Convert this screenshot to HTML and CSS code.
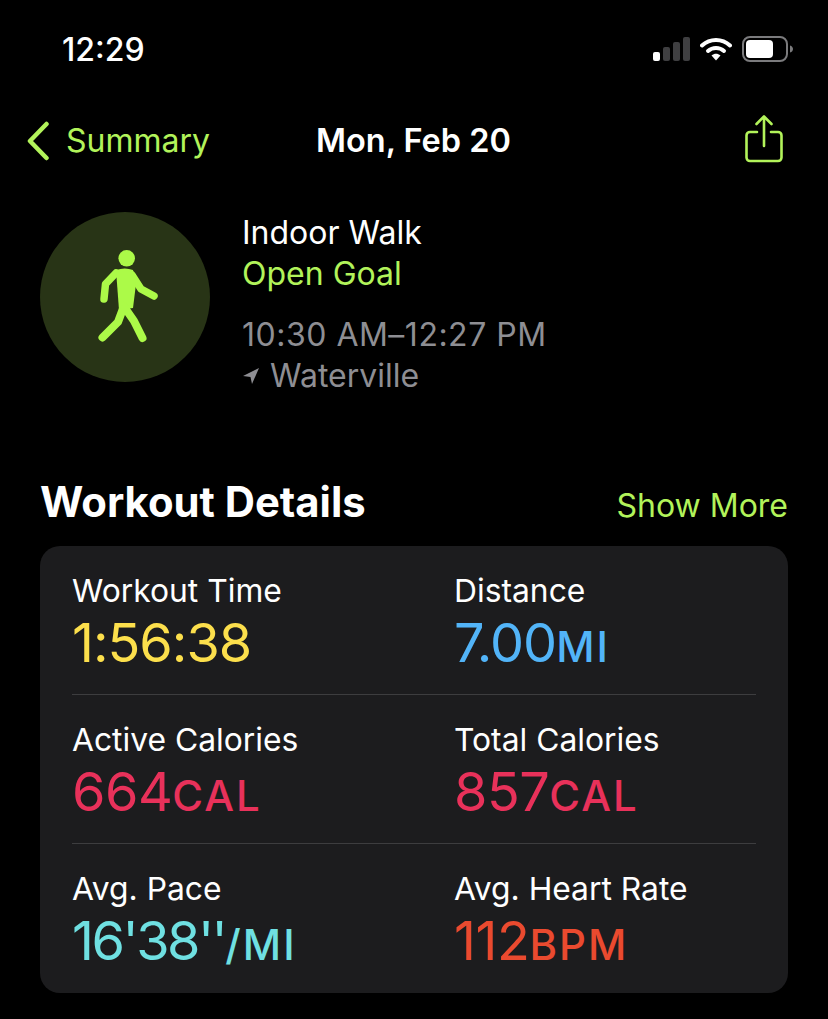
FILE: index.html
```html
<!DOCTYPE html>
<html lang="en">
<head>
    <meta charset="UTF-8">
    <meta name="viewport" content="width=device-width, initial-scale=1.0">
    <title>Workout Details</title>
    <link rel="stylesheet" href="styles.css">
</head>
<body>

    <header class="status-bar">
        <span class="clock">12:29</span>
        <div class="status-icons">
            <svg class="signal" width="37" height="24" viewBox="0 0 37 24">
                <rect x="0" y="15" width="7" height="9" rx="2" fill="#fff"/>
                <rect x="10" y="10" width="7" height="14" rx="2" fill="#3f3f41"/>
                <rect x="20" y="5" width="7" height="19" rx="2" fill="#3f3f41"/>
                <rect x="30" y="0" width="7" height="24" rx="2" fill="#3f3f41"/>
            </svg>
            <svg class="wifi" width="32" height="24" viewBox="0 0 32 24">
                <path d="M2 8.500C10 1 22 1 30 8.500" fill="none" stroke="#fff" stroke-width="4" stroke-linecap="round"/>
                <path d="M8 14C12.500 10 19.500 10 24 14" fill="none" stroke="#fff" stroke-width="4" stroke-linecap="round"/>
                <path d="M11.500 18.500C14.500 16 17.500 16 20.500 18.500L16 23.500Z" fill="#fff"/>
            </svg>
            <svg class="battery" width="52" height="26" viewBox="0 0 52 26">
                <rect x="1" y="1" width="44" height="24" rx="7" fill="none" stroke="#7b7b7d" stroke-width="2"/>
                <rect x="4" y="4" width="27" height="18" rx="4" fill="#fff"/>
                <path d="M48 9.500C50 10 51 11.500 51 13C51 14.500 50 16 48 16.500Z" fill="#7b7b7d"/>
            </svg>
        </div>
    </header>

    <nav class="nav-bar">
        <a class="back" href="#">
            <svg width="24" height="40" viewBox="0 0 24 40">
                <path d="M20.500 3L4 20L20.500 37" fill="none" stroke="#b2f35a" stroke-width="4.500" stroke-linecap="round" stroke-linejoin="round"/>
            </svg>
            <span>Summary</span>
        </a>
        <h1 class="nav-title">Mon, Feb 20</h1>
        <svg class="share" width="38" height="48" viewBox="0 0 38 48">
            <path d="M12 17H5C3 17 1.500 18.500 1.500 20.500V42.500C1.500 44.500 3 46 5 46H33C35 46 36.500 44.500 36.500 42.500V20.500C36.500 18.500 35 17 33 17H26" fill="none" stroke="#b2f35a" stroke-width="2.600" stroke-linecap="round"/>
            <path d="M19 31V2M11.500 9L19 1.500L26.500 9" fill="none" stroke="#b2f35a" stroke-width="2.600" stroke-linecap="round" stroke-linejoin="round"/>
        </svg>
    </nav>

    <section class="hero">
        <div class="activity-icon">
            <svg width="62" height="94" viewBox="0 0 62 94">
                <circle cx="29.700" cy="8.300" r="8.300" fill="#acfa48"/>
                <path d="M19 23L8.500 34L7 49" fill="none" stroke="#acfa48" stroke-width="7.500" stroke-linecap="round" stroke-linejoin="round"/>
                <path d="M35 25L44 39L57 46" fill="none" stroke="#acfa48" stroke-width="7.500" stroke-linecap="round" stroke-linejoin="round"/>
                <path d="M19 20Q28 17 36 20L39 34L36 58L22 60Z" fill="#acfa48"/>
                <path d="M27 56L21 72L5.500 87.500" fill="none" stroke="#acfa48" stroke-width="8" stroke-linecap="round" stroke-linejoin="round"/>
                <path d="M28 58L37 71L45.500 88" fill="none" stroke="#acfa48" stroke-width="8" stroke-linecap="round" stroke-linejoin="round"/>
            </svg>
        </div>
        <div class="hero-text">
            <p class="hero-name">Indoor Walk</p>
            <p class="hero-goal">Open Goal</p>
            <p class="hero-time">10:30 AM–12:27 PM</p>
            <p class="hero-place">
                <svg width="18" height="18" viewBox="0 0 18 18"><path d="M17 1L1 9L8.500 10L10 17Z" fill="#8e8e93"/></svg>
                <span>Waterville</span>
            </p>
        </div>
    </section>

    <section class="details">
        <div class="details-head">
            <h2>Workout Details</h2>
            <a href="#">Show More</a>
        </div>
        <div class="card">
            <div class="row">
                <div class="metric">
                    <div class="label">Workout Time</div>
                    <div class="value yellow">1:56:38</div>
                </div>
                <div class="metric">
                    <div class="label">Distance</div>
                    <div class="value blue">7.00<small>MI</small></div>
                </div>
            </div>
            <div class="row">
                <div class="metric">
                    <div class="label">Active Calories</div>
                    <div class="value pink">664<small>CAL</small></div>
                </div>
                <div class="metric">
                    <div class="label">Total Calories</div>
                    <div class="value pink">857<small>CAL</small></div>
                </div>
            </div>
            <div class="row">
                <div class="metric">
                    <div class="label">Avg. Pace</div>
                    <div class="value teal">16'38''<small>/MI</small></div>
                </div>
                <div class="metric">
                    <div class="label">Avg. Heart Rate</div>
                    <div class="value red">112<small>BPM</small></div>
                </div>
            </div>
        </div>
    </section>

</body>
</html>
```

FILE: styles.css
```css
* {
    box-sizing: border-box;
}
body {
    font-family: Inter, "Liberation Sans", sans-serif;
    background-color: #000;
    color: #fff;
    margin: 0;
    padding: 0;
    height: 1019px;
    overflow: hidden;
}
p, h1, h2 {
    margin: 0;
}
a {
    text-decoration: none;
}
.status-bar {
    display: flex;
    justify-content: space-between;
    align-items: center;
    height: 98px;
    padding: 0 34px 0 62px;
}
.clock {
    font-size: 32px;
    font-weight: 500;
}
.status-icons {
    display: flex;
    align-items: center;
    gap: 10px;
}
.nav-bar {
    display: flex;
    align-items: center;
    height: 85px;
    padding: 0 45px 0 26px;
    position: relative;
    justify-content: space-between;
}
.back {
    display: flex;
    align-items: center;
    gap: 16px;
    color: #b2f35a;
    font-size: 32px;
}
.nav-title {
    font-size: 32.500px;
    font-weight: 600;
    position: absolute;
    left: 316px;
}
.share {
    margin-bottom: 3px;
}
.hero {
    display: flex;
    gap: 32px;
    padding: 29px 40px 0;
    height: 289px;
}
.activity-icon {
    width: 170px;
    height: 170px;
    border-radius: 50%;
    background-color: #283416;
    display: flex;
    align-items: center;
    justify-content: center;
    padding-left: 6px;
}
.hero-text {
    font-size: 32px;
    line-height: 41px;
}
.hero-goal {
    color: #b2f35a;
    margin-bottom: 20px;
}
.hero-time, .hero-place {
    color: #8e8e93;
}
.hero-time {
    letter-spacing: 0.500px;
}
.hero-place {
    display: flex;
    align-items: center;
    gap: 10px;
}
.details {
    padding: 0 40px;
}
.details-head {
    display: flex;
    justify-content: space-between;
    align-items: center;
    height: 60px;
    margin-bottom: 14px;
}
.details-head h2 {
    font-size: 41.800px;
    font-weight: 700;
}
.details-head a {
    color: #b2f35a;
    font-size: 32px;
    padding-top: 6px;
}
.card {
    background-color: #1c1c1e;
    border-radius: 20px;
    padding: 0 32px;
}
.row {
    display: grid;
    grid-template-columns: 382px 1fr;
    height: 149px;
    padding-top: 25px;
    border-bottom: 1px solid #3d3d3f;
}
.row:last-child {
    border-bottom: none;
}
.label {
    font-size: 31.800px;
    line-height: 40px;
}
.value {
    font-size: 54px;
    line-height: 62px;
    margin-top: 1px;
    letter-spacing: -0.500px;
}
.value small {
    font-size: 42px;
    font-weight: 500;
    letter-spacing: 2px;
}
.yellow {
    color: #fcdf4c;
    letter-spacing: -1px;
}
.blue {
    color: #52b4f8;
    letter-spacing: -1px;
}
.pink {
    color: #e8315a;
}
.teal {
    color: #6fe0e2;
    letter-spacing: -2.500px;
}
.red {
    color: #ea4a2f;
}
```
